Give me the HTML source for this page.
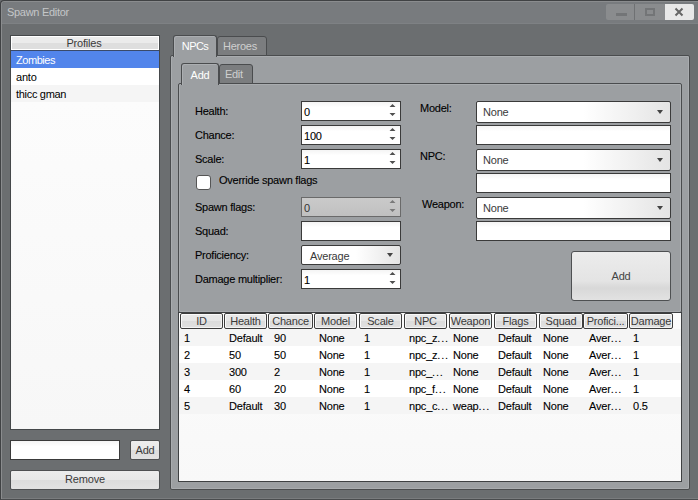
<!DOCTYPE html>
<html><head><meta charset="utf-8">
<style>
*{margin:0;padding:0;box-sizing:border-box}
html,body{width:698px;height:500px;overflow:hidden;background:#6b6e70;font-family:"Liberation Sans",sans-serif;font-size:11px;color:#000;letter-spacing:-0.2px}
.a{position:absolute}
#win{left:0;top:0;width:740px;height:500px;background:#6b6e70;border-left:1px solid #404244;border-top:1px solid #404244;border-bottom:1px solid #4a4c4e;border-radius:4px 0 0 0;box-shadow:inset 1px 1px 0 #8a8c8e,inset 0 -1px 0 #7a7c7e}
#title{left:2px;top:2px;width:740px;height:22px;background:#787b7e;border-radius:3px 0 0 0;box-shadow:inset 0 -1px 0 #7e8184}
#ttxt{left:8px;top:6px;color:#c4c6c8;font-size:11px;letter-spacing:-0.3px}
.wb{top:4px;height:16px;background:#8a8c8e}
.lbl{font-size:11px;letter-spacing:-0.25px;color:#000;white-space:nowrap;-webkit-text-stroke:0.1px #000}
.field{background:linear-gradient(#f4f4f4,#fff 30%,#fff);border:1px solid #3a3a3a}
.spin{position:absolute;right:5px;width:0;height:0;border-left:2.5px solid transparent;border-right:2.5px solid transparent}
.up{top:2px;border-bottom:3px solid #505050}
.dn{top:11px;border-top:3px solid #505050}
.combo{background:linear-gradient(to right,#fff 0%,#fff 55%,#e4e4e4 100%);border:1px solid #3a3a3a;border-radius:2px}
.arr{position:absolute;right:7px;top:7px;width:0;height:0;border-left:3.5px solid transparent;border-right:3.5px solid transparent;border-top:4px solid #444}
.btn{background:linear-gradient(#ececec 0%,#e8e8e8 50%,#dcdcdc 51%,#e2e2e2 100%);border:1px solid #4e5052;border-radius:2px;text-align:center;color:#3a3a3a}
.hd{top:313px;height:16px;background:linear-gradient(#e9e9e9 0%,#e6e6e6 50%,#dcdcdc 51%,#e0e0e0 100%);border:1px solid #3c3c3c;border-radius:2px;box-shadow:inset 1px 1px 0 #fafafa,inset -1px -1px 0 #f4f4f4;text-align:center;line-height:14px;color:#3a3a3a;overflow:hidden;white-space:nowrap;letter-spacing:-0.2px}
.row{left:179px;width:502px;height:17px}
.cell{position:absolute;top:3px;white-space:nowrap;color:#000;-webkit-text-stroke:0.1px #000}
.sheet{background:#9c9fa2;border:1px solid #4a4c4e;border-radius:2px;box-shadow:inset 1px 1px 0 #a9acaf,inset -1px -1px 0 #a9acaf}
.tabA{background:#9c9fa2;border:1px solid #4a4c4e;border-bottom:none;border-radius:3px 3px 0 0;color:#fff;text-align:center;box-shadow:inset 1px 1px 0 #abaeb1}
.tabI{background:#7b7d7f;border:1px solid #4a4c4e;border-radius:3px 3px 0 0;color:#cfcfcf;text-align:center}

</style></head><body>
<div id="win" class="a"></div>
<div id="title" class="a"></div>
<div id="ttxt" class="a" style="left:7px">Spawn Editor</div>
<div class="a wb" style="left:606px;width:28px;border-radius:2px 0 0 2px"></div>
<div class="a" style="left:616px;top:13px;width:11px;height:3px;background:#737577"></div>
<div class="a wb" style="left:635px;width:30px"></div>
<div class="a" style="left:634px;top:4px;width:1px;height:16px;background:#6f7173"></div>
<div class="a" style="left:645px;top:8px;width:10px;height:8px;border:2px solid #737577"></div>
<div class="a wb" style="left:665px;width:29px;background:#e8e8e8;border-radius:0 2px 2px 0"></div>
<svg class="a" style="left:674px;top:7px" width="10" height="10" viewBox="0 0 10 10"><path d="M1.5 1.5L8.5 8.5M8.5 1.5L1.5 8.5" stroke="#666" stroke-width="2"/></svg>

<!-- profiles -->
<div class="a" style="left:10px;top:35px;width:150px;height:395px;background:linear-gradient(#fdfdfd,#f7f7f7);border:1px solid #45484a"></div>
<div class="a" style="left:11px;top:36px;width:148px;height:15px;background:linear-gradient(#ebebeb 0%,#ebebeb 50%,#dedede 50%,#dedede 100%);border-bottom:1px solid #3a4a6a;box-shadow:inset 1px 1px 0 #fff,inset -1px -1px 0 #fff;text-align:center;line-height:14px;color:#3a3a3a;letter-spacing:-0.2px;padding-right:2px">Profiles</div>
<div class="a" style="left:11px;top:51px;width:148px;height:17px;background:#5285eb;color:#fff;padding-left:5px;padding-top:3px;letter-spacing:-0.45px">Zombies</div>
<div class="a" style="left:11px;top:68px;width:148px;height:17px;background:#fff;padding-left:5px;padding-top:3px">anto</div>
<div class="a" style="left:11px;top:85px;width:148px;height:17px;background:#f5f5f5;padding-left:5px;padding-top:3px;letter-spacing:-0.3px">thicc gman</div>
<div class="a field" style="left:10px;top:440px;width:110px;height:20px"></div>
<div class="a btn" style="left:130px;top:440px;width:30px;height:20px;line-height:18px">Add</div>
<div class="a btn" style="left:10px;top:470px;width:150px;height:20px;line-height:17px">Remove</div>

<!-- property sheet -->
<div class="a sheet" style="left:170px;top:55px;width:520px;height:435px"></div>
<div class="a tabA" style="left:173px;top:35px;width:44px;height:22px;line-height:20px;letter-spacing:-0.6px">NPCs</div>
<div class="a tabI" style="left:217px;top:36px;width:50px;height:20px;line-height:19px;text-align:left;padding-left:5px;letter-spacing:-0.25px">Heroes</div>

<!-- inner sheet -->
<div class="a sheet" style="left:178px;top:83px;width:504px;height:230px"></div>
<div class="a tabA" style="left:181px;top:63px;width:38px;height:22px;line-height:22px">Add</div>
<div class="a tabI" style="left:219px;top:64px;width:34px;height:20px;line-height:19px;text-align:left;padding-left:5px;letter-spacing:-0.3px">Edit</div>

<div class="a lbl" style="left:195px;top:105px">Health:</div>
<div class="a lbl" style="left:195px;top:129px">Chance:</div>
<div class="a lbl" style="left:195px;top:153px">Scale:</div>
<div class="a" style="left:196px;top:175px;width:15px;height:15px;background:#fff;border:1px solid #555;border-radius:3px"></div>
<div class="a lbl" style="left:219px;top:174px">Override spawn flags</div>
<div class="a lbl" style="left:195px;top:201px">Spawn flags:</div>
<div class="a lbl" style="left:195px;top:225px">Squad:</div>
<div class="a lbl" style="left:195px;top:249px">Proficiency:</div>
<div class="a lbl" style="left:195px;top:273px">Damage multiplier:</div>

<div class="a field" style="left:301px;top:101px;width:100px;height:20px"><span class="cell" style="left:2px;top:4px">0</span><svg class="a" style="left:85px;top:0" width="10" height="18"><path d="M2.5 5L8.5 5L5.5 2Z M2.5 11L8.5 11L5.5 14Z" fill="#505050"/></svg></div>
<div class="a field" style="left:301px;top:125px;width:100px;height:20px"><span class="cell" style="left:2px;top:4px">100</span><svg class="a" style="left:85px;top:0" width="10" height="18"><path d="M2.5 5L8.5 5L5.5 2Z M2.5 11L8.5 11L5.5 14Z" fill="#505050"/></svg></div>
<div class="a field" style="left:301px;top:149px;width:100px;height:20px"><span class="cell" style="left:2px;top:4px">1</span><svg class="a" style="left:85px;top:0" width="10" height="18"><path d="M2.5 5L8.5 5L5.5 2Z M2.5 11L8.5 11L5.5 14Z" fill="#505050"/></svg></div>
<div class="a field" style="left:301px;top:197px;width:100px;height:20px;background:linear-gradient(#cacaca,#c0c0c0);border-color:#6a6a6a"><span class="cell" style="left:2px;top:4px;color:#333;-webkit-text-stroke:0">0</span><svg class="a" style="left:85px;top:0" width="10" height="18"><path d="M2.5 5L8.5 5L5.5 2Z M2.5 11L8.5 11L5.5 14Z" fill="#7a7a7a"/></svg></div>
<div class="a field" style="left:301px;top:221px;width:100px;height:20px"></div>
<div class="a combo" style="left:301px;top:245px;width:100px;height:20px"><span class="cell" style="left:8px;top:4px;color:#3a3a3a;-webkit-text-stroke:0">Average</span><i class="arr"></i></div>
<div class="a field" style="left:301px;top:269px;width:100px;height:20px"><span class="cell" style="left:2px;top:4px">1</span><svg class="a" style="left:85px;top:0" width="10" height="18"><path d="M2.5 5L8.5 5L5.5 2Z M2.5 11L8.5 11L5.5 14Z" fill="#505050"/></svg></div>

<div class="a lbl" style="left:420px;top:102px">Model:</div>
<div class="a lbl" style="left:420px;top:150px">NPC:</div>
<div class="a lbl" style="left:422px;top:198px">Weapon:</div>
<div class="a combo" style="left:476px;top:101px;width:195px;height:22px"><span class="cell" style="left:6px;top:4px;color:#3a3a3a;-webkit-text-stroke:0">None</span><i class="arr" style="top:8px"></i></div>
<div class="a field" style="left:476px;top:125px;width:195px;height:20px"></div>
<div class="a combo" style="left:476px;top:149px;width:195px;height:22px"><span class="cell" style="left:6px;top:4px;color:#3a3a3a;-webkit-text-stroke:0">None</span><i class="arr" style="top:8px"></i></div>
<div class="a field" style="left:476px;top:173px;width:195px;height:20px"></div>
<div class="a combo" style="left:476px;top:197px;width:195px;height:22px"><span class="cell" style="left:6px;top:4px;color:#3a3a3a;-webkit-text-stroke:0">None</span><i class="arr" style="top:8px"></i></div>
<div class="a field" style="left:476px;top:221px;width:195px;height:20px"></div>
<div class="a btn" style="left:571px;top:251px;width:100px;height:50px;background:linear-gradient(#ececec,#e4e4e4 60%,#d8d8d8 75%,#e2e2e2);border-radius:3px;line-height:48px;color:#444">Add</div>

<!-- list -->
<div class="a" style="left:178px;top:312px;width:504px;height:170px;background:linear-gradient(#fcfcfc,#f8f8f8);border:1px solid #3e4042"></div>

<div class="a hd" style="left:180px;width:43px">ID</div>
<div class="a hd" style="left:224px;width:43px">Health</div>
<div class="a hd" style="left:268px;width:45px">Chance</div>
<div class="a hd" style="left:314px;width:43px">Model</div>
<div class="a hd" style="left:359px;width:43px">Scale</div>
<div class="a hd" style="left:404px;width:43px">NPC</div>
<div class="a hd" style="left:449px;width:43px">Weapon</div>
<div class="a hd" style="left:494px;width:43px">Flags</div>
<div class="a hd" style="left:539px;width:44px">Squad</div>
<div class="a hd" style="left:583px;width:45px">Profici...</div>
<div class="a hd" style="left:629px;width:44px">Damage</div>
<div class="a row" style="top:329px;background:#f5f5f5"><span class="cell" style="left:5px">1</span><span class="cell" style="left:50px">Default</span><span class="cell" style="left:95px">90</span><span class="cell" style="left:140px">None</span><span class="cell" style="left:185px">1</span><span class="cell" style="left:230px">npc_z<span style="letter-spacing:0.8px">...</span></span><span class="cell" style="left:274px">None</span><span class="cell" style="left:319px">Default</span><span class="cell" style="left:364px">None</span><span class="cell" style="left:410px">Aver<span style="letter-spacing:0.8px">...</span></span><span class="cell" style="left:454px">1</span></div>
<div class="a row" style="top:346px;background:#ffffff"><span class="cell" style="left:5px">2</span><span class="cell" style="left:50px">50</span><span class="cell" style="left:95px">50</span><span class="cell" style="left:140px">None</span><span class="cell" style="left:185px">1</span><span class="cell" style="left:230px">npc_z<span style="letter-spacing:0.8px">...</span></span><span class="cell" style="left:274px">None</span><span class="cell" style="left:319px">Default</span><span class="cell" style="left:364px">None</span><span class="cell" style="left:410px">Aver<span style="letter-spacing:0.8px">...</span></span><span class="cell" style="left:454px">1</span></div>
<div class="a row" style="top:363px;background:#f5f5f5"><span class="cell" style="left:5px">3</span><span class="cell" style="left:50px">300</span><span class="cell" style="left:95px">2</span><span class="cell" style="left:140px">None</span><span class="cell" style="left:185px">1</span><span class="cell" style="left:230px">npc_<span style="letter-spacing:0.8px">...</span></span><span class="cell" style="left:274px">None</span><span class="cell" style="left:319px">Default</span><span class="cell" style="left:364px">None</span><span class="cell" style="left:410px">Aver<span style="letter-spacing:0.8px">...</span></span><span class="cell" style="left:454px">1</span></div>
<div class="a row" style="top:380px;background:#ffffff"><span class="cell" style="left:5px">4</span><span class="cell" style="left:50px">60</span><span class="cell" style="left:95px">20</span><span class="cell" style="left:140px">None</span><span class="cell" style="left:185px">1</span><span class="cell" style="left:230px">npc_f<span style="letter-spacing:0.8px">...</span></span><span class="cell" style="left:274px">None</span><span class="cell" style="left:319px">Default</span><span class="cell" style="left:364px">None</span><span class="cell" style="left:410px">Aver<span style="letter-spacing:0.8px">...</span></span><span class="cell" style="left:454px">1</span></div>
<div class="a row" style="top:397px;background:#f5f5f5"><span class="cell" style="left:5px">5</span><span class="cell" style="left:50px">Default</span><span class="cell" style="left:95px">30</span><span class="cell" style="left:140px">None</span><span class="cell" style="left:185px">1</span><span class="cell" style="left:230px">npc_c<span style="letter-spacing:0.8px">...</span></span><span class="cell" style="left:274px">weap<span style="letter-spacing:0.8px">...</span></span><span class="cell" style="left:319px">Default</span><span class="cell" style="left:364px">None</span><span class="cell" style="left:410px">Aver<span style="letter-spacing:0.8px">...</span></span><span class="cell" style="left:454px">0.5</span></div>
</body></html>
